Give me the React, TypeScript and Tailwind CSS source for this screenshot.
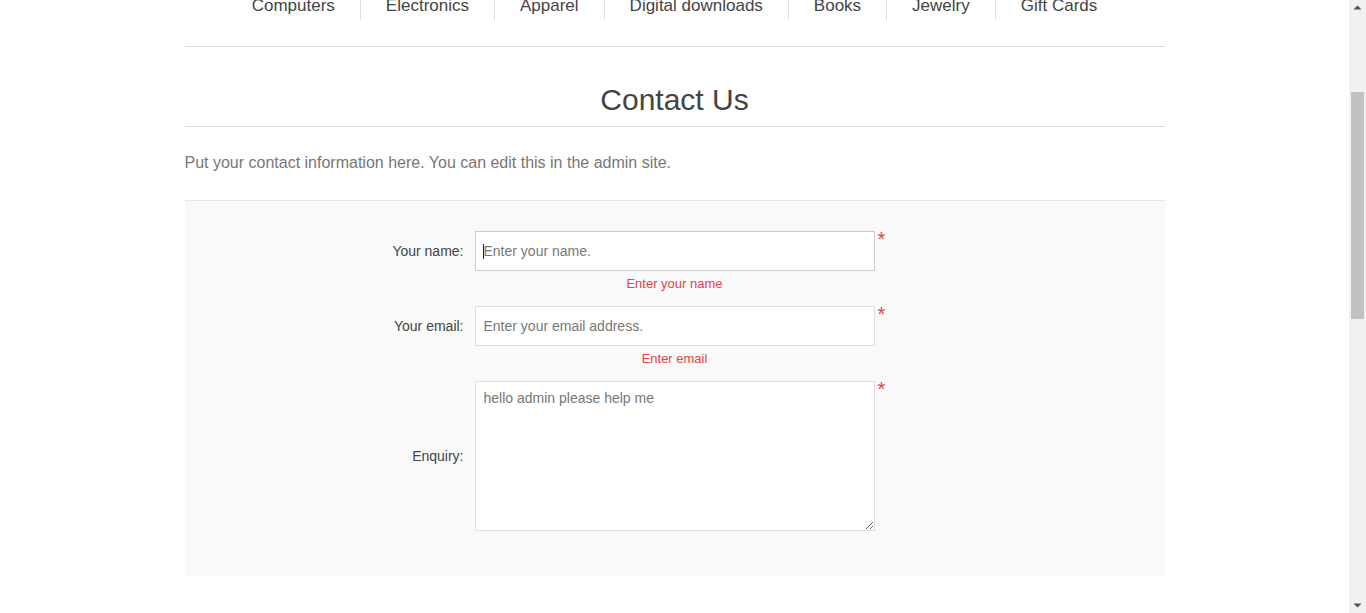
import React from "react";

const items = ["Computers", "Electronics", "Apparel", "Digital downloads", "Books", "Jewelry", "Gift Cards"];

function Required() {
  return <span className="self-start ml-[3px] text-[20px] leading-[16px] text-[#e4434b]">*</span>;
}

export default function App() {
  return (
    <div className="flex h-[613px] overflow-hidden bg-white font-['Liberation_Sans',Arial,sans-serif]">
      <div className="flex-1 overflow-hidden">
        <div className="w-[980px] mx-auto">
          <div className="-mt-[31px] pt-[26px] pb-[26px] border-b border-[#ddd]">
            <ul className="flex justify-center">
              {items.map((t, i) => (
                <li
                  key={t}
                  className={
                    i === 0
                      ? "h-[25px] px-[25px] text-[17px] leading-[22px] text-[#444] whitespace-nowrap"
                      : "h-[25px] px-[25px] text-[17px] leading-[22px] text-[#444] whitespace-nowrap border-l border-[#ddd]"
                  }
                >
                  {t}
                </li>
              ))}
            </ul>
          </div>

          <div className="mt-[29px] pt-[6px] pb-[8px] border-b border-[#ddd] text-center">
            <h1 className="text-[30px] leading-[36px] text-[#444] font-normal">Contact Us</h1>
          </div>

          <p className="mt-[25px] text-[16px] leading-[22px] text-[#777]">
            Put your contact information here. You can edit this in the admin site.
          </p>

          <div className="mt-[26px] border-t border-[#e6e6e6] bg-[#f9f9f9] pt-[30px] pb-[30px]">
            <div className="mb-[15px]">
              <div className="flex items-center">
                <label className="w-[290px] pr-[11px] text-right text-[14px] text-[#444]">Your name:</label>
                <div className="relative">
                  <input
                    className="block w-[400px] h-[40px] border border-[#ccc] bg-white px-[8px] text-[14px] text-[#777] placeholder:text-[#777] outline-none"
                    placeholder="Enter your name."
                  />
                  <span className="absolute left-[8px] top-[13px] h-[15px] w-px bg-[#222]" />
                </div>
                <Required />
              </div>
              <div className="mt-[5px] text-center text-[13px] leading-[15px] text-[#e4434b]">Enter your name</div>
            </div>

            <div className="mb-[15px]">
              <div className="flex items-center">
                <label className="w-[290px] pr-[11px] text-right text-[14px] text-[#444]">Your email:</label>
                <input
                  className="block w-[400px] h-[40px] border border-[#ddd] bg-white px-[8px] text-[14px] text-[#777] placeholder:text-[#777] outline-none"
                  placeholder="Enter your email address."
                />
                <Required />
              </div>
              <div className="mt-[5px] text-center text-[13px] leading-[15px] text-[#e4434b]">Enter email</div>
            </div>

            <div className="mb-[15px]">
              <div className="flex items-center">
                <label className="w-[290px] pr-[11px] text-right text-[14px] text-[#444]">Enquiry:</label>
                <textarea
                  className="block w-[400px] h-[150px] border border-[#ddd] bg-white p-[8px] text-[14px] leading-[17px] text-[#777] outline-none"
                  defaultValue="hello admin please help me"
                />
                <Required />
              </div>
            </div>
          </div>
        </div>
      </div>

      <div className="w-[17px] h-full bg-[#f1f1f1] flex flex-col items-center">
        <svg width="17" height="17" viewBox="0 0 17 17" className="shrink-0">
          <path d="M4.5 9.5 L8.5 5.5 L12.5 9.5 Z" fill="#505050" />
        </svg>
        <div className="mt-[75px] w-[13px] h-[227px] bg-[#c1c1c1]" />
        <div className="flex-1" />
        <svg width="17" height="17" viewBox="0 0 17 17" className="shrink-0">
          <path d="M4.5 7.5 L8.5 11.5 L12.5 7.5 Z" fill="#505050" />
        </svg>
      </div>
    </div>
  );
}
